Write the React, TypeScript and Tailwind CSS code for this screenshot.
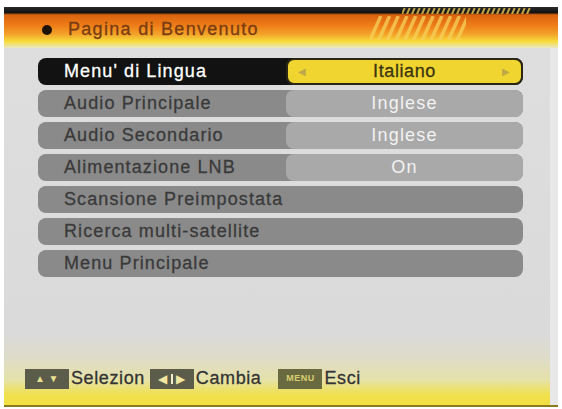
import React from "react";

const font = { fontFamily: '"Liberation Sans", Arial, sans-serif' };

type Row = { label: string; value?: string; active?: boolean };

const rows: Row[] = [
  { label: "Menu' di Lingua", value: "Italiano", active: true },
  { label: "Audio Principale", value: "Inglese" },
  { label: "Audio Secondario", value: "Inglese" },
  { label: "Alimentazione LNB", value: "On" },
  { label: "Scansione Preimpostata" },
  { label: "Ricerca multi-satellite" },
  { label: "Menu Principale" },
];

const Stripes = ({ count, w, h }: { count: number; w: number; h: number }) => (
  <svg width={w} height={h} viewBox={`0 0 ${w} ${h}`}>
    {Array.from({ length: count }).map((_, i) => {
      const step = w / count;
      const x = i * step + h * 0.45;
      return (
        <line
          key={i}
          x1={x}
          y1={0}
          x2={x - h * 0.45}
          y2={h}
          stroke="#f6d25a"
          strokeOpacity={0.75}
          strokeWidth={step * 0.4}
        />
      );
    })}
  </svg>
);

const MenuRow = ({ row }: { row: Row }) => {
  if (row.active) {
    return (
      <div className="flex h-[27px] items-stretch rounded-[8px] bg-[#121212]">
        <div className="flex flex-1 items-center pl-[26px] text-[18px] tracking-[1.1px] text-white [-webkit-text-stroke:0.3px_#fff]">
          {row.label}
        </div>
        <div className="relative flex w-[237px] items-center justify-center rounded-[8px] border-2 border-[#2a2814] bg-[#f0d530] text-[18px] tracking-[0.6px] text-[#3a3410] [-webkit-text-stroke:0.3px_#3a3410]">
          <span className="absolute left-[10px] text-[10px] text-[#c0a848] [-webkit-text-stroke:0]">◀</span>
          {row.value}
          <span className="absolute right-[10px] text-[10px] text-[#c0a848] [-webkit-text-stroke:0]">▶</span>
        </div>
      </div>
    );
  }
  return (
    <div className="flex h-[27px] items-stretch rounded-[8px] bg-[#8a8a8a]">
      <div className="flex flex-1 items-center pl-[26px] text-[18px] tracking-[1.1px] text-[#3a3a3a] [-webkit-text-stroke:0.3px_#3a3a3a]">
        {row.label}
      </div>
      {row.value && (
        <div className="flex w-[237px] items-center justify-center rounded-[8px] bg-[#a9a9a9] text-[18px] tracking-[1.2px] text-[#f2f2f2]">
          {row.value}
        </div>
      )}
    </div>
  );
};

const KeyBox = ({ children }: { children: React.ReactNode }) => (
  <div className="flex h-[20px] w-[44px] items-center justify-center gap-[3px] bg-[#5c5c4a]">
    {children}
  </div>
);

export default function App() {
  return (
    <div className="h-[409px] w-[562px] bg-white pt-[7px] pl-[4px]" style={font}>
      <div className="flex h-[400px] w-[554px] flex-col">
        {/* header */}
        <div className="relative h-[41px] bg-[linear-gradient(to_bottom,#2a2a2a_0%,#111_14%,#d9620e_19%,#ee7d18_45%,#f3a22a_66%,#f6dc3a_84%,#e9e6c6_100%)]">
          <div className="absolute left-[398px] top-[1px]">
            <Stripes count={26} w={130} h={6} />
          </div>
          <div className="absolute left-[366px] top-[9px]">
            <Stripes count={11} w={96} h={24} />
          </div>
          <div className="relative flex h-full items-center pt-[4px]">
            <div className="ml-[38px] h-[10px] w-[10px] rounded-full bg-[#1c1208]" />
            <div className="ml-[16px] text-[18px] tracking-[1.3px] text-[#7a3c12] [-webkit-text-stroke:0.3px_#7a3c12]">
              Pagina di Benvenuto
            </div>
          </div>
        </div>
        {/* body */}
        <div className="flex flex-1 bg-[linear-gradient(to_bottom,#dedede_0%,#dadada_80%,#dedcc8_87%,#e6e2a8_93%,#f0e050_97%,#f2e040_100%)]">
          <div className="flex flex-1 flex-col pt-[10px] pl-[34px] pr-[27px]">
            <div className="flex flex-col gap-[5px]">
              {rows.map((r) => (
                <MenuRow key={r.label} row={r} />
              ))}
            </div>
            <div className="mt-auto mb-[13px] ml-[-13px] flex items-center text-[18px] tracking-[0.6px] text-[#333] [-webkit-text-stroke:0.3px_#333]">
              <KeyBox>
                <span className="text-[10px] leading-none text-[#e8e090] [-webkit-text-stroke:0]">▲</span>
                <span className="text-[10px] leading-none text-[#e8e090] [-webkit-text-stroke:0]">▼</span>
              </KeyBox>
              <span className="ml-[2px] mr-[5px]">Selezion</span>
              <KeyBox>
                <span className="text-[12px] leading-none text-[#f0e8a0] [-webkit-text-stroke:0]">◀</span>
                <span className="h-[10px] w-[2px] bg-[#f0eccc]" />
                <span className="text-[12px] leading-none text-[#f0e8a0] [-webkit-text-stroke:0]">▶</span>
              </KeyBox>
              <span className="ml-[2px] mr-[17px]">Cambia</span>
              <div className="flex h-[20px] w-[44px] items-center justify-center bg-[#6a6a40] text-[9px] font-bold tracking-[0.5px] text-[#d8d070] [-webkit-text-stroke:0]">
                MENU
              </div>
              <span className="ml-[2px]">Esci</span>
            </div>
          </div>
          <div className="w-[8px] bg-[#e8e8e8]" />
        </div>
        <div className="h-[2px] bg-[#8a7a20]" />
      </div>
    </div>
  );
}
